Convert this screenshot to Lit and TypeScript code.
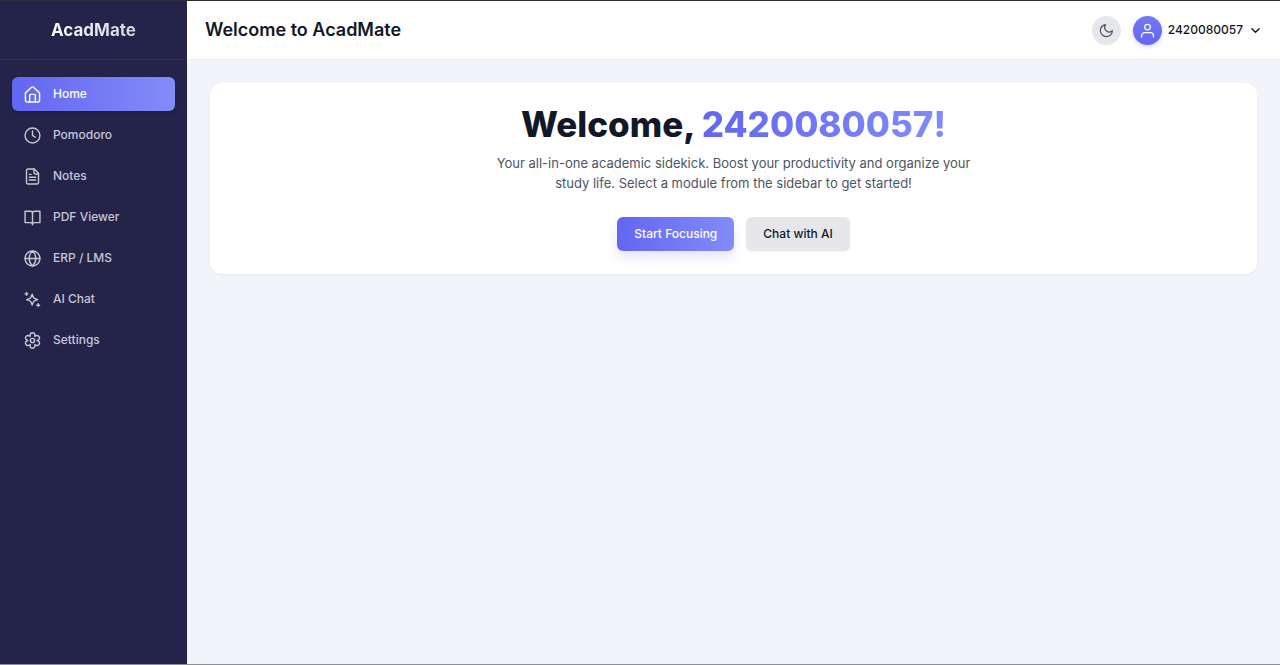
import { LitElement, html, css, svg } from "lit";
import { customElement, state } from "lit/decorators.js";
import { classMap } from "lit/directives/class-map.js";

const icons = {
  home: svg`<path d="M2 10.500a2 2 0 0 1 .7-1.500l8-7.200a2 2 0 0 1 2.600 0l8 7.200a2 2 0 0 1 .7 1.500V20.500a2 2 0 0 1-2 2H4a2 2 0 0 1-2-2z"/><path d="M8 22.500V13a1.200 1.200 0 0 1 1.200-1.200h5.600A1.200 1.200 0 0 1 16 13v9.500"/>`,
  clock: svg`<circle cx="12" cy="12" r="10.500"/><path d="M12 5.500V12l3.800 2.400"/>`,
  notes: svg`<path d="M14.500 1.500h-9a2 2 0 0 0-2 2v17a2 2 0 0 0 2 2h13a2 2 0 0 0 2-2v-13z"/><path d="M14 1.500v5a2 2 0 0 0 2 2h4.500M7.500 9h2.500M7.500 13h9M7.500 17h9"/>`,
  book: svg`<path d="M12 6.200a3 3 0 0 0-3-3H1.500v16H9a3 3 0 0 1 3 3zM12 6.200a3 3 0 0 1 3-3h7.500v16H15a3 3 0 0 0-3 3z"/>`,
  globe: svg`<circle cx="12" cy="12" r="10.500"/><path d="M1.500 12h21M12 1.500c-3 2.800-4.600 6.500-4.600 10.500S9 19.700 12 22.500c3-2.800 4.600-6.500 4.600-10.500S15 4.300 12 1.500z"/>`,
  sparkles: svg`<path d="M11.500 4.500l1.700 4.300a3 3 0 0 0 1.700 1.700l4.300 1.700-4.300 1.700a3 3 0 0 0-1.700 1.700l-1.700 4.300-1.700-4.300a3 3 0 0 0-1.700-1.700L3.800 12.200l4.300-1.700a3 3 0 0 0 1.700-1.700z"/><path d="M3.500 2v4M1.500 4h4M20 18v4M18 20h4"/>`,
  settings: svg`<path d="M8.700 4.300a3.300 3.300 0 0 1 6.600 0v2l1.700-1a3.300 3.300 0 0 1 3.300 5.700L18.500 12l1.800 1a3.300 3.300 0 0 1-3.300 5.700l-1.700-1v2a3.300 3.300 0 0 1-6.600 0v-2l-1.700 1A3.300 3.300 0 0 1 3.700 13l1.800-1-1.800-1A3.300 3.300 0 0 1 7 5.300l1.700 1z"/><circle cx="12" cy="12" r="3"/>`,
  moon: svg`<path d="M10.500 2.500a7.500 7.500 0 0 0 11 10A9.700 9.700 0 1 1 10.500 2.500z"/>`,
  user: svg`<circle cx="12" cy="6.500" r="4.500"/><path d="M2.500 22.500v-2a5 5 0 0 1 5-5h9a5 5 0 0 1 5 5v2"/>`,
  chevron: svg`<path d="M4 8l8 8 8-8"/>`,
};

type IconName = keyof typeof icons;

const icon = (name: IconName) =>
  html`<svg class="icon" viewBox="0 0 24 24" aria-hidden="true">${icons[name]}</svg>`;

const modules: { label: string; icon: IconName }[] = [
  { label: "Home", icon: "home" },
  { label: "Pomodoro", icon: "clock" },
  { label: "Notes", icon: "notes" },
  { label: "PDF Viewer", icon: "book" },
  { label: "ERP / LMS", icon: "globe" },
  { label: "AI Chat", icon: "sparkles" },
  { label: "Settings", icon: "settings" },
];

@customElement("app-root")
export class AppRoot extends LitElement {
  @state() private active = "Home";

  private user = "2420080057";

  static styles = css`
    :host {
      --accent: linear-gradient(90deg, #6366f1, #818cf8);
      display: grid;
      grid-template-columns: 187px 1fr;
      min-height: 100vh;
      box-sizing: border-box;
      border-top: 1px solid #2e2d35;
      border-bottom: 1px solid #8d8e94;
      background: #f3f4fa;
      color: #111827;
      font-family: Inter, sans-serif;
      font-size: 12px;
      line-height: 20px;
    }
    * {
      box-sizing: border-box;
    }
    h1,
    h2,
    p,
    ul {
      margin: 0;
      padding: 0;
    }
    button {
      border: 0;
      font: inherit;
      color: inherit;
      cursor: pointer;
    }
    .icon {
      display: block;
      flex: none;
      width: 17px;
      height: 17px;
      fill: none;
      stroke: currentColor;
      stroke-width: 2;
      stroke-linecap: round;
      stroke-linejoin: round;
    }
    .sidebar {
      background: #24234a;
      color: #c6c6d5;
    }
    .brand {
      display: grid;
      place-items: center;
      height: 59px;
      border-bottom: 1px solid #2d2c53;
      font-size: 17px;
      font-weight: 700;
    }
    .brand-name {
      background: linear-gradient(90deg, #ffffff, #d1d5db);
      background-clip: text;
      -webkit-background-clip: text;
      color: transparent;
    }
    .modules {
      display: grid;
      gap: 7px;
      padding: 17px 12px;
      list-style: none;
    }
    .module {
      display: flex;
      align-items: center;
      gap: 12px;
      height: 34px;
      padding: 0 12px;
      border-radius: 6px;
      color: inherit;
      font-weight: 500;
      text-decoration: none;
    }
    .module.active {
      background: var(--accent);
      color: #ffffff;
      box-shadow: 0 3px 5px rgb(0 0 0 / 0.15);
    }
    .topbar {
      display: flex;
      align-items: center;
      justify-content: space-between;
      height: 59px;
      padding: 0 18px;
      border-bottom: 1px solid #e9eaf0;
      background: #ffffff;
    }
    .title {
      font-size: 18px;
      font-weight: 600;
    }
    .tools,
    .account,
    .actions {
      display: flex;
      align-items: center;
    }
    .tools {
      gap: 12px;
    }
    .theme,
    .avatar {
      display: grid;
      place-items: center;
      width: 29px;
      height: 29px;
      padding: 0;
      border-radius: 50%;
    }
    .theme {
      background: #e5e7eb;
      color: #4b5563;
    }
    .theme .icon {
      width: 15px;
      height: 15px;
    }
    .account {
      gap: 6px;
      padding: 0;
      background: none;
      font-weight: 500;
    }
    .account > .icon {
      width: 11px;
      height: 11px;
      margin: 0 1px;
      stroke-width: 3;
    }
    .avatar {
      background: linear-gradient(0deg, #6366f1, #7479f5);
      color: #ffffff;
      box-shadow: 0 2px 4px rgb(99 102 241 / 0.25);
    }
    .avatar .icon {
      width: 15px;
      height: 15px;
    }
    .content {
      padding: 23px;
    }
    .hero {
      display: grid;
      justify-items: center;
      padding: 23px;
      border-radius: 12px;
      background: #ffffff;
      box-shadow: 0 1px 2px rgb(0 0 0 / 0.05);
      text-align: center;
    }
    .welcome {
      font-size: 35px;
      font-weight: 800;
      line-height: 36px;
    }
    .name {
      background: var(--accent);
      background-clip: text;
      -webkit-background-clip: text;
      color: transparent;
    }
    .intro {
      max-width: 492px;
      margin-top: 11px;
      color: #4b5563;
      font-size: 13px;
    }
    .actions {
      gap: 12px;
      margin-top: 24px;
    }
    .action {
      height: 34px;
      padding: 0 17px;
      border-radius: 6px;
      background: #e5e7eb;
      font-weight: 500;
      box-shadow: 0 1px 2px rgb(0 0 0 / 0.06);
    }
    .action.primary {
      background: var(--accent);
      color: #ffffff;
      box-shadow: 0 7px 11px rgb(99 102 241 / 0.16);
    }
  `;

  render() {
    return html`
      <aside class="sidebar">
        <div class="brand"><span class="brand-name">AcadMate</span></div>
        <nav aria-label="Modules">
          <ul class="modules">
            ${modules.map(
              (m) => html`<li>
                <a
                  href="#"
                  class=${classMap({ module: true, active: m.label === this.active })}
                  @click=${(e: Event) => {
                    e.preventDefault();
                    this.active = m.label;
                  }}
                  >${icon(m.icon)}<span>${m.label}</span></a
                >
              </li>`
            )}
          </ul>
        </nav>
      </aside>
      <div class="page">
        <header class="topbar">
          <h1 class="title">Welcome to AcadMate</h1>
          <div class="tools">
            <button class="theme" aria-label="Toggle dark mode">${icon("moon")}</button>
            <button class="account">
              <span class="avatar">${icon("user")}</span>
              <span>${this.user}</span>
              ${icon("chevron")}
            </button>
          </div>
        </header>
        <main class="content">
          <section class="hero">
            <h2 class="welcome">Welcome, <span class="name">${this.user}!</span></h2>
            <p class="intro">
              Your all-in-one academic sidekick. Boost your productivity and organize your study
              life. Select a module from the sidebar to get started!
            </p>
            <div class="actions">
              <button class="action primary">Start Focusing</button>
              <button class="action">Chat with AI</button>
            </div>
          </section>
        </main>
      </div>
    `;
  }
}
